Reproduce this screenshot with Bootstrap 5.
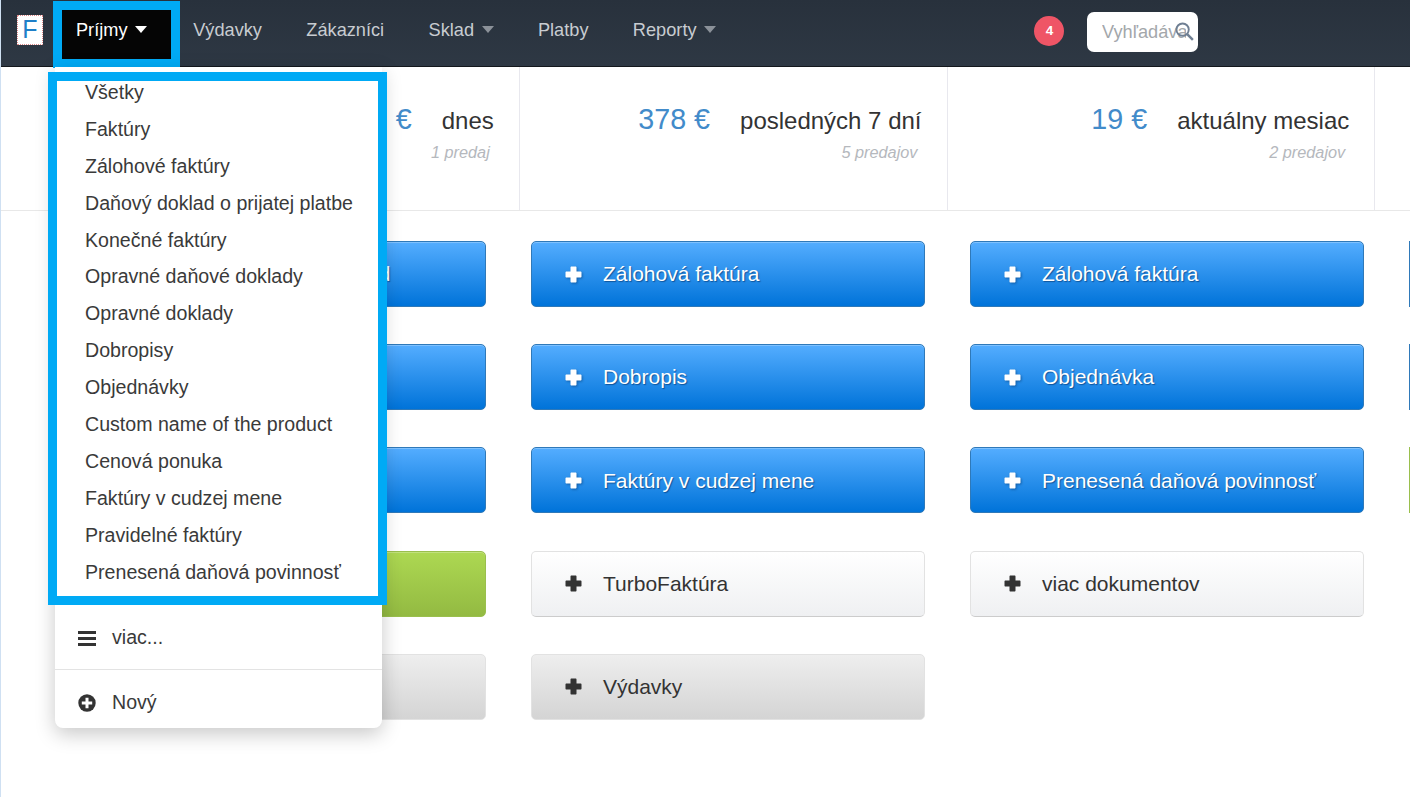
<!DOCTYPE html>
<html lang="sk">
<head>
<meta charset="utf-8">
<title>Príjmy</title>
<link rel="stylesheet" href="https://cdn.jsdelivr.net/npm/bootstrap@5.3.0/dist/css/bootstrap.min.css">
<style>
html,body{height:100%;overflow:hidden}
body{font-family:"Liberation Sans",Arial,sans-serif;background:#fff;color:#333;position:relative;border-left:1px solid #cfe0f2}
.topbar{height:67px;padding:0;background:linear-gradient(#28313c,#2e3844);border-bottom:1px solid #14181d;flex-wrap:nowrap;justify-content:flex-start;align-items:flex-start}
.logo-box{width:26px;height:30px;margin:15px 10.7px 0 16px;background:#fff;border:1px dotted #d88;color:#1e7fc8;font-size:25px;line-height:26px;text-align:center;flex:none}
.top-nav{flex-wrap:nowrap;font-size:18.2px}
.top-nav .nav-link{color:#c8ccd1;padding:0 22.2px;height:59px;margin-top:1px;display:flex;gap:7.5px;align-items:center}
.top-nav .nav-link.active-tab{color:#fff;background:#050505;padding:0 24.5px 0 22.3px;gap:7px}
.caret-mark{display:inline-block;width:0;height:0;border-left:6.5px solid transparent;border-right:6.5px solid transparent;border-top:7px solid #8b9199;margin-top:-3px}
.active-tab .caret-mark{border-top-color:#fff}
.tab-wrap{position:relative}
.hl-tab{position:absolute;left:-1px;top:1px;width:127px;height:67px;border:9px solid #00aaf5;pointer-events:none;z-index:5}
.notif{width:30px;height:30px;background:#ef5566;color:#fff;font-size:13.5px;font-weight:700;display:flex;align-items:center;justify-content:center;padding:0 0 1px 1px;position:absolute;left:1033px;top:16px}
.search-box{position:absolute;left:1086px;top:12px;width:111px;height:40px;background:#fff;border-radius:7px;overflow:hidden}
.search-box .form-control{border:0;height:40px;padding:0 12px 0 15px;font-size:18.2px;background:transparent;box-shadow:none}
.search-box .form-control::placeholder{color:#a3a7ab}
.search-ico{position:absolute;left:88px;top:10px}
.stat-row{height:144px;border-bottom:1px solid #e8e8e8;background:#fff;padding-left:91px}
.stat-cell{width:427.75px;flex:none;border-right:1px solid #e8e8ee;padding:30px 25px 0 0;text-align:right}
.stat-head{display:flex;justify-content:flex-end;align-items:baseline;gap:30px;line-height:44px;font-size:24px;color:#333}
.stat-num{font-size:28.7px;color:#428bca}
.stat-sub{font-size:16.3px;font-style:italic;color:#b5b8bd;line-height:20px;padding-right:4px;margin-top:-1px}
.act-grid{display:grid;grid-template-columns:repeat(3,394px) minmax(0,1fr);column-gap:45px;padding:30px 0 0 91px}
.act-col{display:flex;flex-direction:column;gap:37.2px}
.act-btn{height:66px;width:394px;text-align:left;padding:0 0 0 33px;font-size:21px;border-radius:5px;display:flex;align-items:center;gap:21px;border:1px solid;white-space:nowrap}
.act-btn svg{flex:none}
.tone-blue{color:#fff;border-color:#2f79b9;background:linear-gradient(#54adff,#0073d9);text-shadow:1px 1px 1px rgba(0,40,90,.55);box-shadow:inset 0 1px 0 rgba(255,255,255,.25)}
.tone-blue svg{filter:drop-shadow(1px 1px 1px rgba(0,40,90,.45))}
.tone-green{color:#fff;border-color:#9abf4d;background:linear-gradient(#add852,#93ba42);box-shadow:inset 0 1px 0 rgba(255,255,255,.25)}
.tone-white{color:#333;border-color:#e2e2e2;border-bottom-color:#ccc;background:linear-gradient(#fff,#eff0f2)}
.tone-gray{color:#333;border-color:#e2e2e2;background:linear-gradient(#eee,#d4d4d4)}
.edge-btn{width:1px;padding:0;border-width:0 0 0 1px;border-radius:0;box-shadow:none}
.side-menu{display:block;position:absolute;left:54px;top:67px;width:327px;height:661px;padding:0;margin:0;border:0;border-radius:0 0 8px 8px;box-shadow:0 6px 20px rgba(0,0,0,.22);font-size:19.6px}
.side-menu .dropdown-item{color:#3a3a3a;padding:0 0 0 30px;height:36.9px;line-height:36.9px}
.menu-list{padding-top:7px;height:538px}
.side-menu .menu-extra{display:flex;align-items:center;gap:16px;padding:2px 0 0 23px;height:64px;line-height:1}
.side-menu .dropdown-divider{margin:0;border-color:#e3e3e3}
.hl-menu{position:absolute;left:47px;top:72px;width:339px;height:533px;border:9px solid #00aaf5;pointer-events:none;z-index:1001}
</style>
</head>
<body>
<nav class="navbar topbar">
  <div class="logo-box">F</div>
  <ul class="nav top-nav">
    <li class="nav-item tab-wrap"><a class="nav-link active-tab" href="#">Príjmy <span class="caret-mark"></span></a><div class="hl-tab"></div></li>
    <li class="nav-item"><a class="nav-link" href="#">Výdavky</a></li>
    <li class="nav-item"><a class="nav-link" href="#">Zákazníci</a></li>
    <li class="nav-item"><a class="nav-link" href="#">Sklad <span class="caret-mark"></span></a></li>
    <li class="nav-item"><a class="nav-link" href="#">Platby</a></li>
    <li class="nav-item"><a class="nav-link" href="#">Reporty <span class="caret-mark"></span></a></li>
  </ul>
  <span class="badge rounded-circle notif">4</span>
  <div class="search-box">
    <input class="form-control" type="text" placeholder="Vyhľadávanie">
    <svg class="search-ico" width="19" height="19" viewBox="0 0 20 20" fill="none" stroke="#6f7f93" stroke-width="2"><circle cx="8" cy="8" r="6.5"/><path d="M12.8 12.8 18.8 18.8" stroke-width="2.6"/></svg>
  </div>
</nav>

<div class="d-flex stat-row">
  <div class="stat-cell"><div class="stat-head"><span class="stat-num">42 €</span><span>dnes</span></div><div class="stat-sub">1 predaj</div></div>
  <div class="stat-cell"><div class="stat-head"><span class="stat-num">378 €</span><span>posledných 7 dní</span></div><div class="stat-sub">5 predajov</div></div>
  <div class="stat-cell"><div class="stat-head"><span class="stat-num">19 €</span><span>aktuálny mesiac</span></div><div class="stat-sub">2 predajov</div></div>
</div>

<svg width="0" height="0" class="position-absolute"><defs><path id="plus" d="M5.500 1.500c0-.6.4-1 1-1h4c.6 0 1 .4 1 1v4h4c.6 0 1 .4 1 1v4c0 .6-.4 1-1 1h-4v4c0 .6-.4 1-1 1h-4c-.6 0-1-.4-1-1v-4h-4c-.6 0-1-.4-1-1v-4c0-.6.4-1 1-1h4z"/></defs></svg>

<div class="act-grid">
  <div class="act-col">
    <button class="btn act-btn tone-blue"><svg width="17" height="17" fill="currentColor"><use href="#plus"/></svg>Zálohový daňový doklad</button>
    <button class="btn act-btn tone-blue"><svg width="17" height="17" fill="currentColor"><use href="#plus"/></svg>Faktúra</button>
    <button class="btn act-btn tone-blue"><svg width="17" height="17" fill="currentColor"><use href="#plus"/></svg>Cenová ponuka</button>
    <button class="btn act-btn tone-green"><svg width="17" height="17" fill="currentColor"><use href="#plus"/></svg>Pokladňa</button>
    <button class="btn act-btn tone-gray"><svg width="17" height="17" fill="currentColor"><use href="#plus"/></svg>Sklad</button>
  </div>
  <div class="act-col">
    <button class="btn act-btn tone-blue"><svg width="17" height="17" fill="currentColor"><use href="#plus"/></svg>Zálohová faktúra</button>
    <button class="btn act-btn tone-blue"><svg width="17" height="17" fill="currentColor"><use href="#plus"/></svg>Dobropis</button>
    <button class="btn act-btn tone-blue"><svg width="17" height="17" fill="currentColor"><use href="#plus"/></svg>Faktúry v cudzej mene</button>
    <button class="btn act-btn tone-white"><svg width="17" height="17" fill="currentColor"><use href="#plus"/></svg>TurboFaktúra</button>
    <button class="btn act-btn tone-gray"><svg width="17" height="17" fill="currentColor"><use href="#plus"/></svg>Výdavky</button>
  </div>
  <div class="act-col">
    <button class="btn act-btn tone-blue"><svg width="17" height="17" fill="currentColor"><use href="#plus"/></svg>Zálohová faktúra</button>
    <button class="btn act-btn tone-blue"><svg width="17" height="17" fill="currentColor"><use href="#plus"/></svg>Objednávka</button>
    <button class="btn act-btn tone-blue"><svg width="17" height="17" fill="currentColor"><use href="#plus"/></svg>Prenesená daňová povinnosť</button>
    <button class="btn act-btn tone-white"><svg width="17" height="17" fill="currentColor"><use href="#plus"/></svg>viac dokumentov</button>
  </div>
  <div class="act-col">
    <button class="btn act-btn edge-btn tone-blue" aria-label="Viac"></button>
    <button class="btn act-btn edge-btn tone-blue" aria-label="Viac"></button>
    <button class="btn act-btn edge-btn tone-green" aria-label="Viac"></button>
  </div>
</div>

<div class="dropdown-menu side-menu">
  <div class="menu-list">
    <a class="dropdown-item" href="#">Všetky</a>
    <a class="dropdown-item" href="#">Faktúry</a>
    <a class="dropdown-item" href="#">Zálohové faktúry</a>
    <a class="dropdown-item" href="#">Daňový doklad o prijatej platbe</a>
    <a class="dropdown-item" href="#">Konečné faktúry</a>
    <a class="dropdown-item" href="#">Opravné daňové doklady</a>
    <a class="dropdown-item" href="#">Opravné doklady</a>
    <a class="dropdown-item" href="#">Dobropisy</a>
    <a class="dropdown-item" href="#">Objednávky</a>
    <a class="dropdown-item" href="#">Custom name of the product</a>
    <a class="dropdown-item" href="#">Cenová ponuka</a>
    <a class="dropdown-item" href="#">Faktúry v cudzej mene</a>
    <a class="dropdown-item" href="#">Pravidelné faktúry</a>
    <a class="dropdown-item" href="#">Prenesená daňová povinnosť</a>
  </div>
  <a class="dropdown-item menu-extra" href="#"><svg width="18" height="15" viewBox="0 0 18 15" fill="#333"><rect y="0" width="18" height="3"/><rect y="6" width="18" height="3"/><rect y="12" width="18" height="3"/></svg>viac...</a>
  <hr class="dropdown-divider">
  <a class="dropdown-item menu-extra" href="#"><svg width="18" height="18" viewBox="0 0 18 18"><circle cx="9" cy="9" r="8.7" fill="#333"/><path d="M7.500 3.800h3v3.700h3.700v3h-3.700v3.700h-3v-3.700H3.800v-3h3.700z" fill="#fff"/></svg>Nový</a>
</div>
<div class="hl-menu"></div>

<script src="https://cdn.jsdelivr.net/npm/bootstrap@5.3.0/dist/js/bootstrap.bundle.min.js"></script>
</body>
</html>
